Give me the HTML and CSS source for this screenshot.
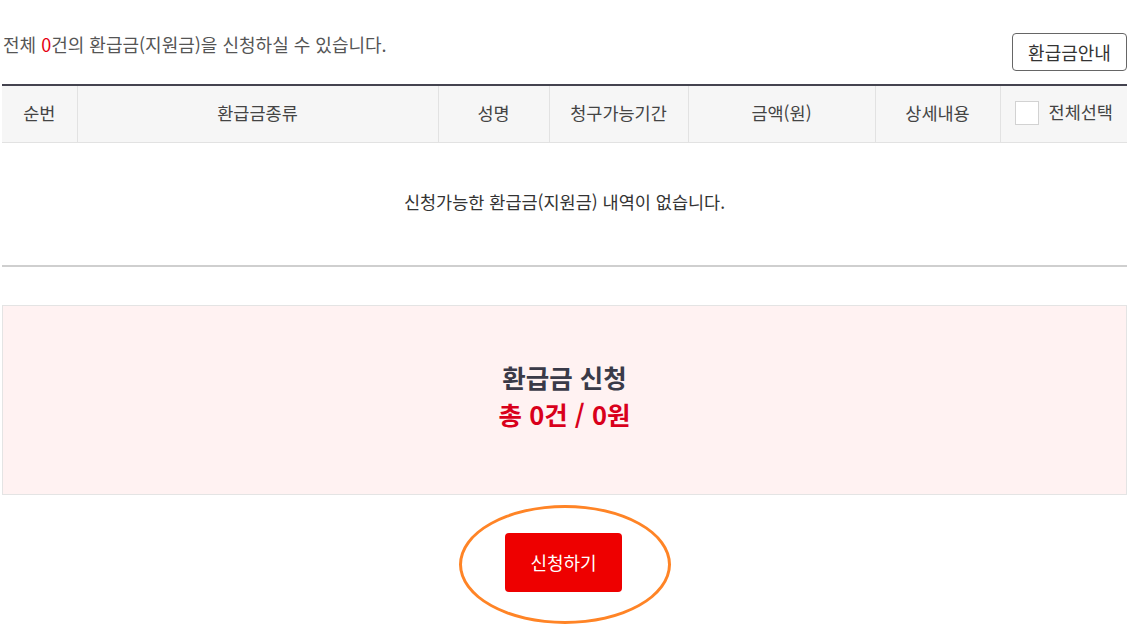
FILE: index.html
```html
<!DOCTYPE html>
<html lang="ko">
<head>
<meta charset="utf-8">
<link rel="stylesheet" href="styles.css">
</head>
<body>
<div class="wrap">
  <div class="top">
    <p class="count">전체 <span class="red">0</span>건의 환급금(지원금)을 신청하실 수 있습니다.</p>
    <button class="guide">환급금안내</button>
  </div>
  <table class="list">
    <thead>
      <tr>
        <th class="c1">순번</th>
        <th class="c2">환급금종류</th>
        <th class="c3">성명</th>
        <th class="c4">청구가능기간</th>
        <th class="c5">금액(원)</th>
        <th class="c6">상세내용</th>
        <th class="c7"><span class="chk"></span>전체선택</th>
      </tr>
    </thead>
    <tbody>
      <tr><td colspan="7" class="empty">신청가능한 환급금(지원금) 내역이 없습니다.</td></tr>
    </tbody>
  </table>
  <div class="summary">
    <div class="s-title">환급금 신청</div>
    <div class="s-total">총 0건 / 0원</div>
  </div>
  <div class="actions">
    <div class="ring">
      <button class="apply">신청하기</button>
    </div>
  </div>
</div>
</body>
</html>
```
FILE: styles.css
```css
* { box-sizing: border-box; }
html, body { margin: 0; padding: 0; background: #fff; }
body {
  font-family: "Noto Sans CJK KR", "Noto Sans", sans-serif;
  color: #333;
}
.wrap { margin: 0 1px 0 2px; }
.top {
  display: flex;
  justify-content: space-between;
  align-items: flex-start;
  padding-top: 33px;
  height: 84px;
}
.count {
  margin: 0;
  margin-top: -2px;
  font-size: 18px;
  line-height: 26px;
  color: #555;
  padding-left: 1px;
}
.red { color: #e60012; }
.guide {
  width: 115px;
  height: 38px;
  border: 1px solid #666;
  border-radius: 4px;
  background: #fff;
  font-family: inherit;
  font-size: 18px;
  color: #333;
  padding: 0;
}
.list {
  width: 100%;
  border-collapse: collapse;
  border-top: 2px solid #44434f;
  table-layout: fixed;
}
.list th {
  background: #f6f6f6;
  height: 57px;
  font-weight: normal;
  font-size: 17.5px;
  color: #444;
  border-bottom: 1px solid #e2e2e2;
  border-left: 1px solid #e2e2e2;
  padding: 0 0 3px;
}
.list th:first-child { border-left: 0; }
.c1 { width: 75px; }
.c2 { width: 361px; }
.c3 { width: 111px; }
.c4 { width: 139px; }
.c5 { width: 187px; }
.c6 { width: 125px; }
.c7 { width: auto; text-align: center; }
.chk {
  display: inline-block;
  width: 24px;
  height: 24px;
  border: 1px solid #d2d2d2;
  background: #fff;
  vertical-align: middle;
  margin-right: 10px;
  position: relative;
  top: -1px;
}
.empty {
  height: 124px;
  text-align: center;
  font-size: 17.5px;
  color: #333;
  border-bottom: 2px solid #cfcfcf;
  padding: 0 0 4px;
}
.summary {
  margin-top: 38px;
  height: 190px;
  background: #fff2f2;
  border: 1px solid #e4e4e4;
  display: flex;
  flex-direction: column;
  align-items: center;
  justify-content: center;
  padding-bottom: 8px;
}
.s-title {
  font-size: 25.5px;
  font-weight: bold;
  color: #3a3a48;
  line-height: 36px;
}
.s-total {
  font-size: 25.5px;
  font-weight: bold;
  color: #d9001b;
  line-height: 38px;
}
.actions {
  display: flex;
  justify-content: center;
  padding-top: 10px;
}
.ring {
  width: 212px;
  height: 119px;
  border: 3px solid #ff8426;
  border-radius: 50%;
  display: flex;
  align-items: center;
  justify-content: center;
}
.apply {
  width: 117px;
  height: 59px;
  background: #ee0000;
  color: #fff;
  border: 0;
  border-radius: 4px;
  font-family: inherit;
  font-size: 18px;
  padding: 0 0 2px;
  margin-left: -2px;
  margin-top: -4px;
}
```
